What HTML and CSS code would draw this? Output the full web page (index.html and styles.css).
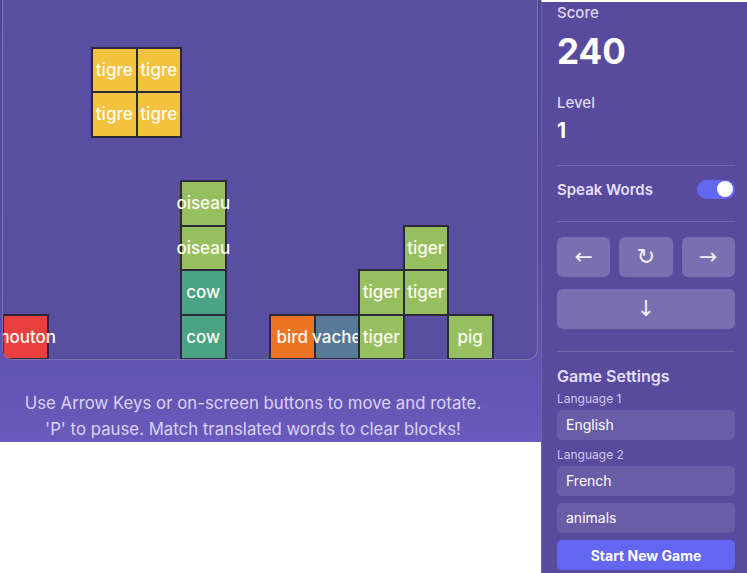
FILE: index.html
```html
<!doctype html>
<html>
    <head>
        <meta name="viewport" content="width=device-width, initial-scale=1">
        <title>Word Tetris</title>
        <link rel="stylesheet" href="styles.css">
    </head>
    <body>
        <div class="app">
            <div class="game">
                <div class="board">
                    <div class="cell yellow" style="grid-column: 3; grid-row: 2;">tigre</div>
                    <div class="cell yellow" style="grid-column: 4; grid-row: 2;">tigre</div>
                    <div class="cell yellow" style="grid-column: 3; grid-row: 3;">tigre</div>
                    <div class="cell yellow" style="grid-column: 4; grid-row: 3;">tigre</div>

                    <div class="cell green" style="grid-column: 5; grid-row: 5;">oiseau</div>
                    <div class="cell green" style="grid-column: 5; grid-row: 6;">oiseau</div>
                    <div class="cell teal" style="grid-column: 5; grid-row: 7;">cow</div>
                    <div class="cell teal" style="grid-column: 5; grid-row: 8;">cow</div>

                    <div class="cell green" style="grid-column: 10; grid-row: 6;">tiger</div>
                    <div class="cell green" style="grid-column: 9; grid-row: 7;">tiger</div>
                    <div class="cell green" style="grid-column: 10; grid-row: 7;">tiger</div>

                    <div class="cell red" style="grid-column: 1; grid-row: 8;">mouton</div>
                    <div class="cell orange" style="grid-column: 7; grid-row: 8;">bird</div>
                    <div class="cell slate" style="grid-column: 8; grid-row: 8;">vache</div>
                    <div class="cell green" style="grid-column: 9; grid-row: 8;">tiger</div>
                    <div class="cell green" style="grid-column: 11; grid-row: 8;">pig</div>
                </div>
                <p class="help">Use Arrow Keys or on-screen buttons to move and rotate.<br>'P' to pause. Match translated words to clear blocks!</p>
            </div>

            <div class="sidebar">
                <div class="stat-label">Score</div>
                <div class="score">240</div>
                <div class="stat-label level-label">Level</div>
                <div class="level">1</div>

                <hr class="divider">

                <div class="toggle-row">
                    <span>Speak Words</span>
                    <span class="toggle"><span class="knob"></span></span>
                </div>

                <hr class="divider">

                <div class="controls">
                    <button type="button" class="ctrl">&larr;</button>
                    <button type="button" class="ctrl">&#8635;</button>
                    <button type="button" class="ctrl">&rarr;</button>
                </div>
                <button type="button" class="ctrl drop">&darr;</button>

                <hr class="divider">

                <h3 class="settings-title">Game Settings</h3>
                <label class="field-label">Language 1</label>
                <div class="field">English</div>
                <label class="field-label">Language 2</label>
                <div class="field">French</div>
                <div class="field topic">animals</div>
                <button type="button" class="start">Start New Game</button>
            </div>
        </div>
    </body>
</html>
```

FILE: styles.css
```css
body {
    margin: 0;
    background-color: #fff;
    font-family: 'Inter', 'Noto Sans', sans-serif;
    color: #fff;
}
.app {
    display: flex;
    align-items: flex-start;
}
.game {
    width: 541px;
    flex: none;
    background: linear-gradient(180deg, #4f4597 0%, #554a9e 60%, #6a5abd 100%);
    padding: 0 3px 0 2px;
    box-sizing: border-box;
}
.board {
    display: grid;
    grid-template-columns: repeat(12, 44.5px);
    grid-template-rows: repeat(8, 44.5px);
    padding-top: 3px;
    width: 534px;
    background-color: #594e9f;
    border: 1px solid rgba(255,255,255,0.22);
    border-top: none;
    border-radius: 0 0 10px 10px;
    overflow: hidden;
}
.cell {
    display: flex;
    align-items: center;
    justify-content: center;
    border: 1px solid #2b2838;
    box-shadow: 0 0 0 1px #2b2838;
    font-size: 17px;
    font-weight: 500;
    white-space: nowrap;
    color: #fdfaf0;
}
.yellow { background-color: #f3c23f; }
.green  { background-color: #96c05f; }
.teal   { background-color: #49a384; }
.red    { background-color: #e9403f; }
.orange { background-color: #ec7322; }
.slate  { background-color: #567a97; }

.help {
    margin: 30px 0 0 0;
    padding-right: 34px;
    font-size: 16.8px;
    line-height: 26px;
    text-align: center;
    color: #dad3f4;
}

.sidebar {
    flex: 1;
    min-height: 573px;
    box-sizing: border-box;
    background-color: #584b9e;
    border-left: 1px solid rgba(255,255,255,0.14);
    border-top: 2px solid #fff;
    padding: 1px 12px 0 15px;
    display: flex;
    flex-direction: column;
}
.stat-label {
    font-size: 15px;
    line-height: 20px;
    font-weight: 500;
    color: #ddd7f4;
}
.score {
    margin-top: 6px;
    font-size: 35px;
    line-height: 44px;
    font-weight: 700;
}
.level-label {
    margin-top: 20px;
}
.level {
    margin-top: 4px;
    font-size: 21px;
    line-height: 28px;
    font-weight: 700;
}
.divider {
    border: none;
    height: 1px;
    background-color: rgba(255,255,255,0.16);
    margin: 20px 0 0 0;
}
.toggle-row {
    margin-top: 11px;
    height: 24px;
    display: flex;
    align-items: center;
    justify-content: space-between;
    font-size: 15px;
    font-weight: 600;
    color: #e4dff7;
}
.toggle {
    width: 38px;
    height: 19px;
    border-radius: 10px;
    background-color: #6366f1;
    display: flex;
    align-items: center;
    justify-content: flex-end;
    padding: 0 2px;
    box-sizing: border-box;
}
.knob {
    width: 16px;
    height: 16px;
    border-radius: 50%;
    background-color: #fff;
}
.toggle-row + .divider {
    margin-top: 20px;
}
.controls {
    margin-top: 15px;
    display: grid;
    grid-template-columns: repeat(3, 1fr);
    gap: 9px;
}
.ctrl {
    height: 40px;
    border: none;
    border-radius: 6px;
    background-color: rgba(255,255,255,0.2);
    color: #f2eefb;
    font-family: 'DejaVu Sans', sans-serif;
    font-size: 22px;
    line-height: 1;
    padding: 0;
}
.drop {
    margin-top: 12px;
}
.drop + .divider {
    margin-top: 22px;
}
.settings-title {
    margin: 13px 0 0 0;
    font-size: 16px;
    line-height: 22px;
    font-weight: 600;
    color: #e4dff7;
}
.field-label {
    margin-top: 4px;
    font-size: 12px;
    line-height: 16px;
    color: #cfc4ea;
}
.field {
    margin-top: 4px;
    height: 30px;
    line-height: 30px;
    padding-left: 9px;
    border-radius: 5px;
    background-color: rgba(255,255,255,0.1);
    font-size: 14px;
    color: #fff;
}
.field + .field-label {
    margin-top: 7px;
}
.field-label + .field {
    margin-top: 3px;
}
.topic {
    margin-top: 7px;
}
.start {
    margin-top: 7px;
    height: 30px;
    border: none;
    border-radius: 5px;
    background-color: #6366f1;
    color: #fff;
    font-family: 'Inter', sans-serif;
    font-size: 14px;
    font-weight: 700;
}
```
